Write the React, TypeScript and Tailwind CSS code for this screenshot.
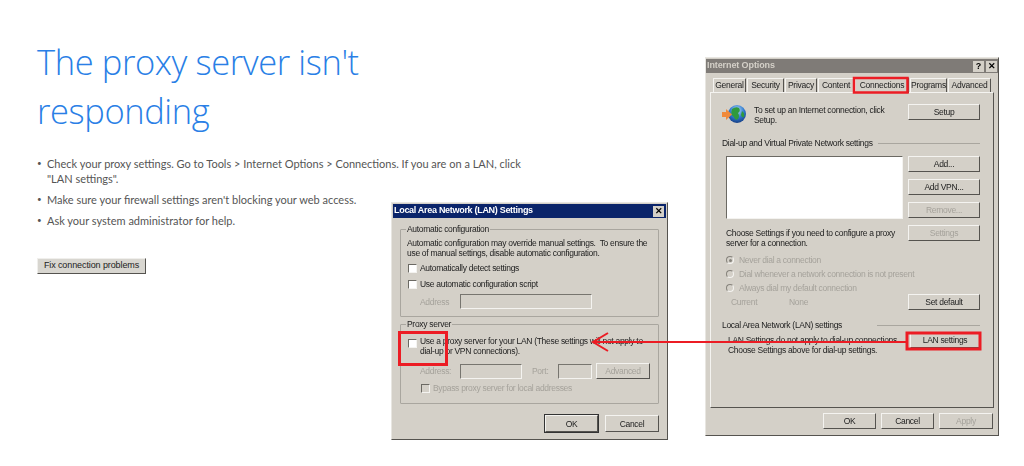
import React from "react";

const winFont = { fontFamily: '"Liberation Sans", Arial, sans-serif' };

function Btn({ label, w = "w-[72px]", h = "h-[16px]", off = false, strong = false }: { label: string; w?: string; h?: string; off?: boolean; strong?: boolean }) {
  return (
    <div className={`${w} ${h} shrink-0 flex items-center justify-center bg-[#d4d0c8] border border-t-[#f4f3f0] border-l-[#f4f3f0] border-r-[#55534f] border-b-[#55534f] text-[8.5px] tracking-[-0.3px] ${off ? "text-[#a5a29b]" : "text-[#222]"} ${strong ? "outline outline-1 outline-[#333]" : ""}`}>
      {label}
    </div>
  );
}

function Tab({ label, w, active = false }: { label: string; w: string; active?: boolean }) {
  return (
    <div className={`${w} ${active ? "h-[16px] -mb-px" : "h-[14px]"} shrink-0 flex items-center justify-center bg-[#d4d0c8] border-t border-l border-r border-t-[#f4f3f0] border-l-[#f4f3f0] border-r-[#55534f] text-[8.5px] tracking-[-0.25px] text-[#222] rounded-t-[1px]`}>
      {label}
    </div>
  );
}

function Check({ off = false }: { off?: boolean }) {
  return <span className={`w-[9px] h-[9px] shrink-0 border border-t-[#6b6963] border-l-[#6b6963] border-r-[#f4f3f0] border-b-[#f4f3f0] ${off ? "bg-[#d4d0c8]" : "bg-white"}`} />;
}

function Radio({ label, on = false }: { label: string; on?: boolean }) {
  return (
    <div className="flex items-center h-[14px] gap-[5px] text-[#a5a29b]">
      <span className="w-[8px] h-[8px] rounded-full border border-[#86837c] border-r-[#f4f3f0] border-b-[#f4f3f0] flex items-center justify-center">
        {on && <span className="w-[3px] h-[3px] rounded-full bg-[#86837c]" />}
      </span>
      {label}
    </div>
  );
}

function Field({ w }: { w: string }) {
  return <div className={`${w} h-[15px] shrink-0 border border-t-[#77756f] border-l-[#77756f] border-r-[#f4f3f0] border-b-[#f4f3f0] bg-[#d4d0c8]`} />;
}

function Group({ title, h, children }: { title: string; h: string; children: React.ReactNode }) {
  return (
    <div className={`relative ${h} border border-[#a9a69f] rounded-[1px] px-[6px]`}>
      <span className="absolute -top-[6px] left-[5px] bg-[#d4d0c8] px-px leading-[11px] text-[#222]">{title}</span>
      {children}
    </div>
  );
}

function Globe() {
  return (
    <svg width="25" height="20" viewBox="0 0 25 20" className="shrink-0">
      <defs>
        <radialGradient id="gl" cx="0.5" cy="0.3" r="0.7">
          <stop offset="0" stopColor="#c4e4f8" />
          <stop offset="0.55" stopColor="#2f7bd0" />
          <stop offset="1" stopColor="#173f86" />
        </radialGradient>
      </defs>
      <circle cx="15" cy="10" r="9" fill="url(#gl)" />
      <path d="M10 5 Q14 2 17 4 Q19 7 16 9 Q18 12 16 15 Q13 17 12 13 Q8 11 10 5Z" fill="#2f9a3c" />
      <path d="M20 7 Q23 9 22 13 Q20 14 19 11Z" fill="#2f9a3c" />
      <path d="M0 8 H4 V5 L10 10.5 L4 16 V13 H0Z" fill="#f08a3c" />
    </svg>
  );
}

function InternetOptions() {
  return (
    <section style={winFont} className="absolute left-[705px] top-[57px] w-[294px] h-[379px] bg-[#d4d0c8] border border-[#e8e6e1] border-r-[#55534f] border-b-[#55534f] blur-[0.3px]">
      <div className="h-[14px] mt-px flex items-center justify-between pl-[1px] pr-[1px] bg-[#7f7b77] text-[9px] font-bold tracking-[-0.1px] text-[#d4d0c8]">
        <span>Internet Options</span>
        <span className="flex gap-[2px]">
          <span className="w-[11px] h-[11px] bg-[#d4d0c8] text-black flex items-center justify-center text-[9px] leading-none">?</span>
          <span className="w-[11px] h-[11px] bg-[#d4d0c8] text-black flex items-center justify-center text-[9px] leading-none">✕</span>
        </span>
      </div>
      <div className="flex items-end gap-px h-[15px] mt-[4px] pl-[7px]">
        <Tab label="General" w="w-[33px]" />
        <Tab label="Security" w="w-[37px]" />
        <Tab label="Privacy" w="w-[32px]" />
        <Tab label="Content" w="w-[36px]" />
        <Tab label="Connections" w="w-[54px]" active />
        <Tab label="Programs" w="w-[37px]" />
        <Tab label="Advanced" w="w-[43px]" />
      </div>
      <div className="ml-[4px] w-[284px] h-[316px] border border-t-[#f4f3f0] border-l-[#f4f3f0] border-r-[#55534f] border-b-[#55534f] pl-[11px] pr-[13px] text-[8.5px] tracking-[-0.3px] leading-[10px] text-[#222]">
        <div className="flex mt-[11px] items-start">
          <Globe />
          <p className="ml-[7px] w-[156px] pt-[1px]">To set up an Internet connection, click Setup.</p>
          <Btn label="Setup" />
        </div>
        <div className="mt-[13px] flex items-center gap-[5px] leading-[11px]">
          <span className="whitespace-nowrap">Dial-up and Virtual Private Network settings</span>
          <span className="w-[103px] h-px bg-[#a9a69f] block" />
        </div>
        <div className="flex mt-[7px] justify-between pl-[4px]">
          <div className="w-[177px]">
            <div className="h-[63px] bg-white border border-t-[#6b6963] border-l-[#6b6963] border-r-[#f4f3f0] border-b-[#f4f3f0]" />
            <p className="mt-[10px] leading-[9.5px]">Choose Settings if you need to configure a proxy server for a connection.</p>
          </div>
          <div className="flex flex-col gap-[7px]">
            <Btn label="Add..." />
            <Btn label="Add VPN..." />
            <Btn label="Remove..." off />
            <Btn label="Settings" off />
          </div>
        </div>
        <div className="mt-[5px] pl-[4px]">
          <Radio label="Never dial a connection" on />
          <Radio label="Dial whenever a network connection is not present" />
          <Radio label="Always dial my default connection" />
        </div>
        <div className="flex items-center pl-[9px] -mt-px text-[#a5a29b]">
          <span className="w-[58px]">Current</span>
          <span>None</span>
          <span className="ml-auto"><Btn label="Set default" /></span>
        </div>
        <div className="mt-[10px] flex items-center justify-between">
          <span>Local Area Network (LAN) settings</span>
          <span className="w-[103px] h-px bg-[#a9a69f] block" />
        </div>
        <div className="flex items-start justify-between mt-[2px] pl-[6px]">
          <p className="pt-[4px] w-[185px] leading-[9.5px]">LAN Settings do not apply to dial-up connections. Choose Settings above for dial-up settings.</p>
          <Btn label="LAN settings" w="w-[70px]" />
        </div>
      </div>
      <div className="flex justify-end gap-[5px] mt-[5px] pr-[5px]">
        <Btn label="OK" w="w-[53px]" />
        <Btn label="Cancel" w="w-[53px]" />
        <Btn label="Apply" w="w-[54px]" off />
      </div>
    </section>
  );
}

function LanSettings() {
  return (
    <section style={winFont} className="absolute left-[391px] top-[202px] w-[277px] h-[238px] bg-[#d4d0c8] border border-[#e8e6e1] border-r-[#55534f] border-b-[#55534f] blur-[0.3px]">
      <div className="h-[14px] mt-px mx-px flex items-center justify-between pl-px pr-[2px] bg-[#0a246a] text-[9px] font-bold tracking-[-0.3px] text-white">
        <span>Local Area Network (LAN) Settings</span>
        <span className="w-[11px] h-[11px] bg-[#d4d0c8] text-black flex items-center justify-center text-[9px] leading-none">✕</span>
      </div>
      <div className="px-[8px] mt-[11px] text-[8.5px] tracking-[-0.3px] leading-[10px] text-[#222]">
        <Group title="Automatic configuration" h="h-[88px]">
          <p className="pt-[8px] whitespace-pre-wrap">Automatic configuration may override manual settings.  To ensure the use of manual settings, disable automatic configuration.</p>
          <div className="flex items-center gap-[3px] mt-[4px] pl-px h-[12px]"><Check /><span>Automatically detect settings</span></div>
          <div className="flex items-center gap-[3px] mt-[4px] pl-px h-[12px]"><Check /><span>Use automatic configuration script</span></div>
          <div className="flex items-center mt-[4px] pl-[13px] text-[#a5a29b]"><span className="w-[40px]">Address</span><Field w="w-[132px]" /></div>
        </Group>
        <div className="h-[7px]" />
        <Group title="Proxy server" h="h-[80px]">
          <div className="flex items-start gap-[3px] pt-[11px] pl-px">
            <span className="mt-[3px] flex"><Check /></span>
            <p className="w-[235px]">Use a proxy server for your LAN (These settings will not apply to dial-up or VPN connections).</p>
          </div>
          <div className="flex items-center mt-[7px] pl-[13px] text-[#a5a29b]">
            <span className="w-[40px]">Address:</span>
            <Field w="w-[62px]" />
            <span className="ml-[10px] w-[26px]">Port:</span>
            <Field w="w-[34px]" />
            <span className="ml-[4px]"><Btn label="Advanced" w="w-[54px]" off /></span>
          </div>
          <div className="flex items-center gap-[3px] mt-[4px] pl-[14px] text-[#a5a29b]"><Check off /><span>Bypass proxy server for local addresses</span></div>
        </Group>
        <div className="flex justify-end gap-[7px] mt-[11px]">
          <Btn label="OK" w="w-[53px]" h="h-[17px]" strong />
          <Btn label="Cancel" w="w-[54px]" h="h-[17px]" />
        </div>
      </div>
    </section>
  );
}

export default function App() {
  return (
    <div className="relative w-[1024px] h-[466px] bg-white overflow-hidden" style={{ fontFamily: '"Open Sans", "Noto Sans", sans-serif' }}>
      <main className="pl-[37px] pt-[37px] w-[520px]">
        <h1 className="text-[34.5px] leading-[49px] font-light tracking-[-0.4px] text-[#2a7fe6] w-[360px]">The proxy server isn't responding</h1>
        <ul style={{ fontFamily: 'Lato, sans-serif' }} className="mt-[21px] ml-[10px] text-[11px] leading-[15px] text-[#555] w-[482px]">
          <li className="relative mb-[6px] before:content-['•'] before:absolute before:-left-[10px] before:text-[8px]">Check your proxy settings. Go to Tools &gt; Internet Options &gt; Connections. If you are on a LAN, click "LAN settings".</li>
          <li className="relative mb-[6px] before:content-['•'] before:absolute before:-left-[10px] before:text-[8px]">Make sure your firewall settings aren't blocking your web access.</li>
          <li className="relative before:content-['•'] before:absolute before:-left-[10px] before:text-[8px]">Ask your system administrator for help.</li>
        </ul>
        <div style={winFont} className="mt-[30px] w-[109px] h-[16px] flex items-center justify-center bg-[#d8d6d0] border border-t-[#f0efec] border-l-[#f0efec] border-r-[#55534f] border-b-[#55534f] text-[9px] tracking-[-0.1px] text-[#222]">Fix connection problems</div>
      </main>
      <InternetOptions />
      <LanSettings />
      <svg className="absolute inset-0 pointer-events-none" width="1024" height="466" viewBox="0 0 1024 466" fill="none" stroke="#ec1c24">
        <path d="M906 342H594" strokeWidth="1.8" />
        <path d="M608 333L593 342L608 351" strokeWidth="2" />
        <rect x="854" y="78" width="53.5" height="14.5" strokeWidth="2.5" />
        <rect x="907" y="333" width="73" height="16" strokeWidth="3" />
        <rect x="399.5" y="332.5" width="47" height="32" strokeWidth="3" />
      </svg>
    </div>
  );
}
